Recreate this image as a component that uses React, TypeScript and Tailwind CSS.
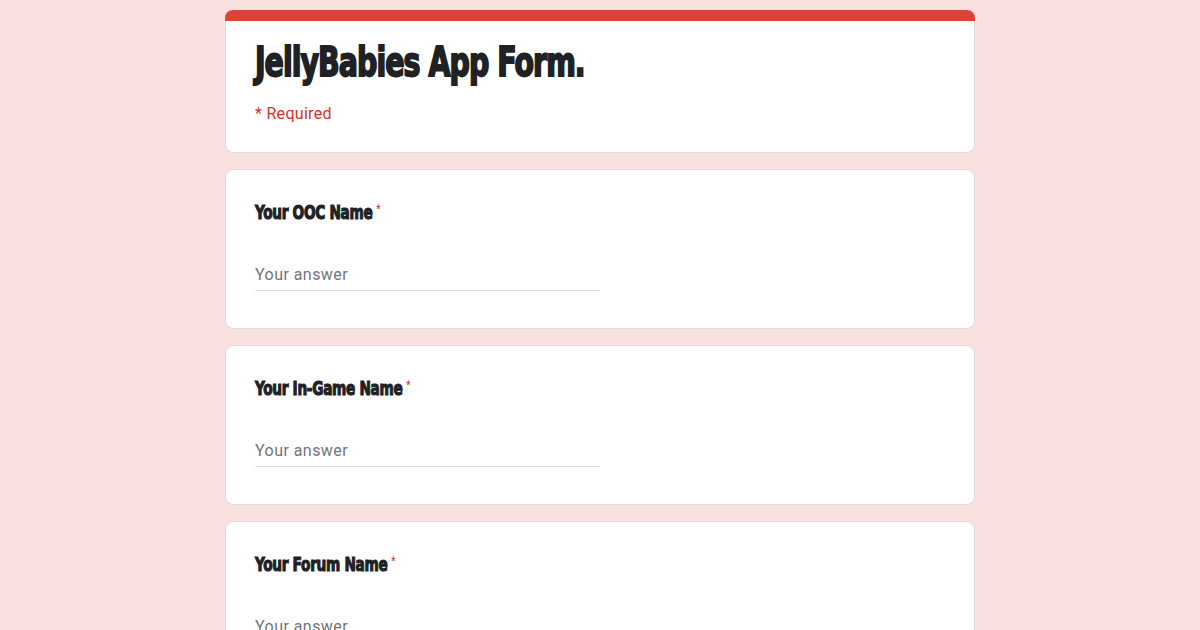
import React from "react";

const heavy = {
  fontFamily: '"DejaVu Sans Condensed", "DejaVu Sans", sans-serif',
};
const roboto = { fontFamily: 'Roboto, "Liberation Sans", sans-serif' };

function Question({ label }: { label: string }) {
  return (
    <div className="w-[750px] rounded-lg border border-[#dadce0] bg-white px-[29px] pt-[30px] pb-[37px]">
      <div className="flex h-[24px] items-start leading-[24px]">
        <span
          className="inline-block origin-left scale-x-[0.76] whitespace-nowrap text-[20px] font-bold tracking-[-0.4px] text-[#202124] [-webkit-text-stroke:1.1px_#202124]"
          style={heavy}
        >
          {label}
          <span
            className="ml-[5px] align-top text-[13px] leading-[18px] font-normal text-[#d93025] [-webkit-text-stroke:0px]"
            style={roboto}
          >
            *
          </span>
        </span>
      </div>
      <div className="mt-[39px] w-[345px] border-b border-[#e0e0e0] pb-[3px]">
        <div className="text-[16px] leading-[24px] tracking-[0.45px] text-[#70757a]" style={roboto}>
          Your answer
        </div>
      </div>
    </div>
  );
}

export default function App() {
  return (
    <div className="h-[630px] overflow-hidden bg-[#fae0de]">
      <div className="flex flex-col items-center gap-[16px] pt-[10px]">
        <div className="w-[750px] rounded-lg border border-t-0 border-[#dadce0] bg-white">
          <div className="-mx-px h-[11px] rounded-t-lg bg-[#db4437]" />
          <div className="px-[29px] pt-[21px] pb-[26px]">
            <div
              className="inline-block origin-left scale-x-[0.79] whitespace-nowrap text-[40px] font-bold leading-[40px] tracking-[-1.2px] text-[#202124] [-webkit-text-stroke:1.8px_#202124]"
              style={heavy}
            >
              JellyBabies App Form.
            </div>
            <div
              className="mt-[20px] text-[16px] leading-[24px] tracking-[0.3px] text-[#d93025]"
              style={roboto}
            >
              * Required
            </div>
          </div>
        </div>
        <Question label="Your OOC Name" />
        <Question label="Your In-Game Name" />
        <Question label="Your Forum Name" />
      </div>
    </div>
  );
}
